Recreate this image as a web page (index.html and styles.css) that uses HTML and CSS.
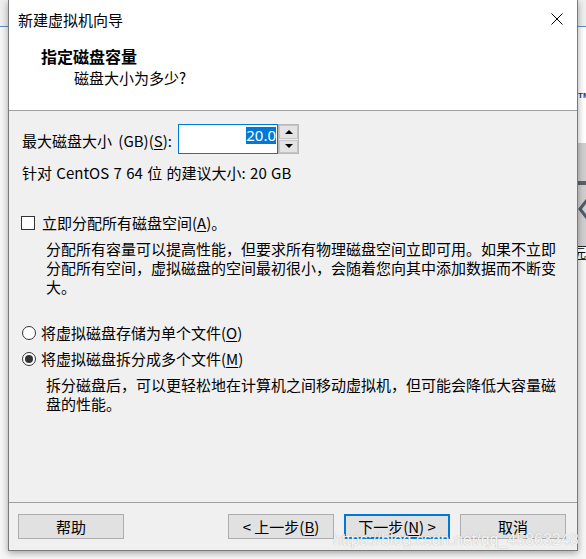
FILE: index.html
```html
<!DOCTYPE html>
<html lang="zh-CN">
<head>
  <meta charset="UTF-8">
  <title>新建虚拟机向导</title>
  <link rel="stylesheet" href="styles.css">
</head>
<body>
  <!-- main window behind the wizard -->
  <div class="app">
    <div class="app-bar"></div>
    <div class="app-side">
      <div class="side-top"><span class="side-logo">TM</span></div>
      <div class="side-panel">
        <div class="side-rule"></div>
        <svg class="side-arrow" width="10" height="32" viewBox="0 0 10 32">
          <polyline points="12,3 2,16 12,29" fill="none" stroke="#4f5d6b" stroke-width="3"/>
        </svg>
      </div>
      <div class="side-tab">元</div>
    </div>
  </div>

  <div class="dialog">
    <div class="titlebar">
      <span class="title">新建虚拟机向导</span>
      <svg class="close" width="12" height="12" viewBox="0 0 12 12">
        <path d="M0.5 0.5 L11.5 11.5 M11.5 0.5 L0.5 11.5" stroke="#000" stroke-width="1"/>
      </svg>
    </div>

    <div class="header">
      <h1>指定磁盘容量</h1>
      <p>磁盘大小为多少?</p>
    </div>

    <div class="content">
      <div class="size-row">
        <label class="size-label">最大磁盘大小 (GB)(<u>S</u>):</label>
        <div class="spin-input"><span class="sel">20.0</span></div>
        <div class="spin-btns">
          <span class="spin-btn"><i class="arrow-up"></i></span>
          <span class="spin-btn"><i class="arrow-down"></i></span>
        </div>
      </div>
      <div class="note">针对 CentOS 7 64 位 的建议大小: 20 GB</div>

      <div class="check-row">
        <span class="box"></span>
        <span>立即分配所有磁盘空间(<u>A</u>)。</span>
      </div>
      <p class="desc">分配所有容量可以提高性能，但要求所有物理磁盘空间立即可用。如果不立即分配所有空间，虚拟磁盘的空间最初很小，会随着您向其中添加数据而不断变大。</p>

      <div class="radio-row first">
        <span class="radio"></span>
        <span>将虚拟磁盘存储为单个文件(<u>O</u>)</span>
      </div>
      <div class="radio-row">
        <span class="radio on"></span>
        <span>将虚拟磁盘拆分成多个文件(<u>M</u>)</span>
      </div>
      <p class="desc">拆分磁盘后，可以更轻松地在计算机之间移动虚拟机，但可能会降低大容量磁盘的性能。</p>
    </div>

    <div class="footer">
      <button class="btn">帮助</button>
      <button class="btn push">&lt; 上一步(<u>B</u>)</button>
      <button class="btn default">下一步(<u>N</u>) &gt;</button>
      <button class="btn">取消</button>
    </div>
  </div>

  <div class="watermark">https://blog.csdn.net/qq_45863248</div>
</body>
</html>
```

FILE: styles.css
```css
*{ box-sizing:border-box; }
body{
  margin:0;
  width:586px;
  height:559px;
  overflow:hidden;
  position:relative;
  background:#f6f6f6;
  font-family:"Noto Sans CJK SC","Noto Sans",sans-serif;
  font-size:15px;
  color:#000;
}
u{ text-decoration:underline; text-underline-offset:2px; }

/* window behind */
.app-bar{
  height:27px;
  background:#efefef;
  border-bottom:1px solid #5b8fc0;
}
.app-side{
  position:absolute;
  left:578px;
  top:27px;
  width:8px;
  overflow:hidden;
}
.side-top{ height:116px; background:#fff; position:relative; }
.side-logo{
  position:absolute;
  left:0; top:64px;
  font:bold 8px "Liberation Sans",sans-serif;
  color:#1d3577;
}
.side-panel{ height:103px; background:#cfcfcf; position:relative; }
.side-rule{ position:absolute; top:38px; left:0; right:0; height:4px; background:#56636f; }
.side-arrow{ position:absolute; left:0; top:50px; }
.side-tab{
  height:14px;
  background:#fff;
  border-top:1px solid #222;
  border-bottom:1px solid #222;
  font-size:12px;
  line-height:12px;
  text-indent:-4px;
}

/* wizard dialog */
.dialog{
  position:absolute;
  left:8px;
  top:0;
  width:570px;
  height:551px;
  border:1px solid #7a7a7a;
  border-top:none;
  background:#f0f0f0;
  box-shadow:0 2px 7px rgba(0,0,0,.35);
  display:flex;
  flex-direction:column;
}
.titlebar{
  height:40px;
  background:#fff;
  display:flex;
  align-items:center;
  justify-content:space-between;
  padding:0 14px 1px 9px;
  line-height:20px;
}
.close{ margin-top:-1px; }
.header{
  background:#fff;
  padding:6px 0 22px 32px;
  border-bottom:1px solid #a0a0a0;
}
.header h1{
  margin:0;
  font-size:16px;
  font-weight:bold;
  line-height:20px;
}
.header p{ margin:2px 0 0 33px; line-height:20px; }

.content{ flex:1; padding:13px 0 0 13px; }

.size-row{ display:flex; align-items:center; height:30px; }
.size-label{ width:156px; padding-top:3px; line-height:20px; word-spacing:3px; }
.spin-input{
  width:100px;
  height:30px;
  border:1px solid #0078d7;
  background:#fff;
  display:flex;
  justify-content:flex-end;
  align-items:flex-start;
  padding:2px 1px 0 0;
}
.sel{
  background:#0078d7;
  color:#fff;
  font-family:"Noto Sans",sans-serif;
  height:17px;
  line-height:17px;
}
.spin-btns{
  width:21px;
  height:30px;
  border:1px solid #b9b9b9;
  display:flex;
  flex-direction:column;
  gap:1px;
  background:#f0f0f0;
}
.spin-btn{
  flex:1;
  background:#e3e3e3;
  border:1px solid #c4c4c4;
  display:flex;
  align-items:center;
  justify-content:center;
}
.arrow-up, .arrow-down{
  width:0; height:0;
  border-left:4px solid transparent;
  border-right:4px solid transparent;
}
.arrow-up{ border-bottom:4px solid #000; }
.arrow-down{ border-top:4px solid #000; }

.note{ margin-top:9px; line-height:20px; word-spacing:1px; }

.check-row, .radio-row{ display:flex; align-items:center; height:20px; line-height:20px; }
.check-row{ margin-top:30px; }
.box{
  width:14px; height:14px;
  border:1px solid #333;
  background:#fff;
  margin:0 7px 0 -1px;
}
.radio-row{ margin-top:6px; }
.radio-row.first{ margin-top:27px; }
.radio{
  width:14px; height:14px;
  border:1px solid #333;
  border-radius:50%;
  background:#fff;
  margin-right:5px;
  display:flex;
  align-items:center;
  justify-content:center;
}
.radio.on::after{
  content:"";
  width:8px; height:8px;
  border-radius:50%;
  background:#333;
}
.desc{
  margin:6px 0 0 24px;
  width:515px;
  line-height:19px;
}

.footer{
  border-top:1px solid #a0a0a0;
  padding:11px 11px 11px 9px;
  display:flex;
  gap:10px;
}
.btn{
  width:106px;
  height:25px;
  padding:0;
  background:#e1e1e1;
  border:1px solid #adadad;
  font:15px/21px "Noto Sans CJK SC","Noto Sans",sans-serif;
  color:#000;
}
.btn.push{ margin-left:auto; }
.btn.default{ border:2px solid #0078d7; }

.watermark{
  position:absolute;
  left:333px;
  top:531px;
  font:16px/18px "Liberation Sans",Arial,sans-serif;
  color:rgba(255,255,255,.9);
  text-shadow:0 0 1px rgba(110,110,110,.6);
  white-space:nowrap;
}
```
